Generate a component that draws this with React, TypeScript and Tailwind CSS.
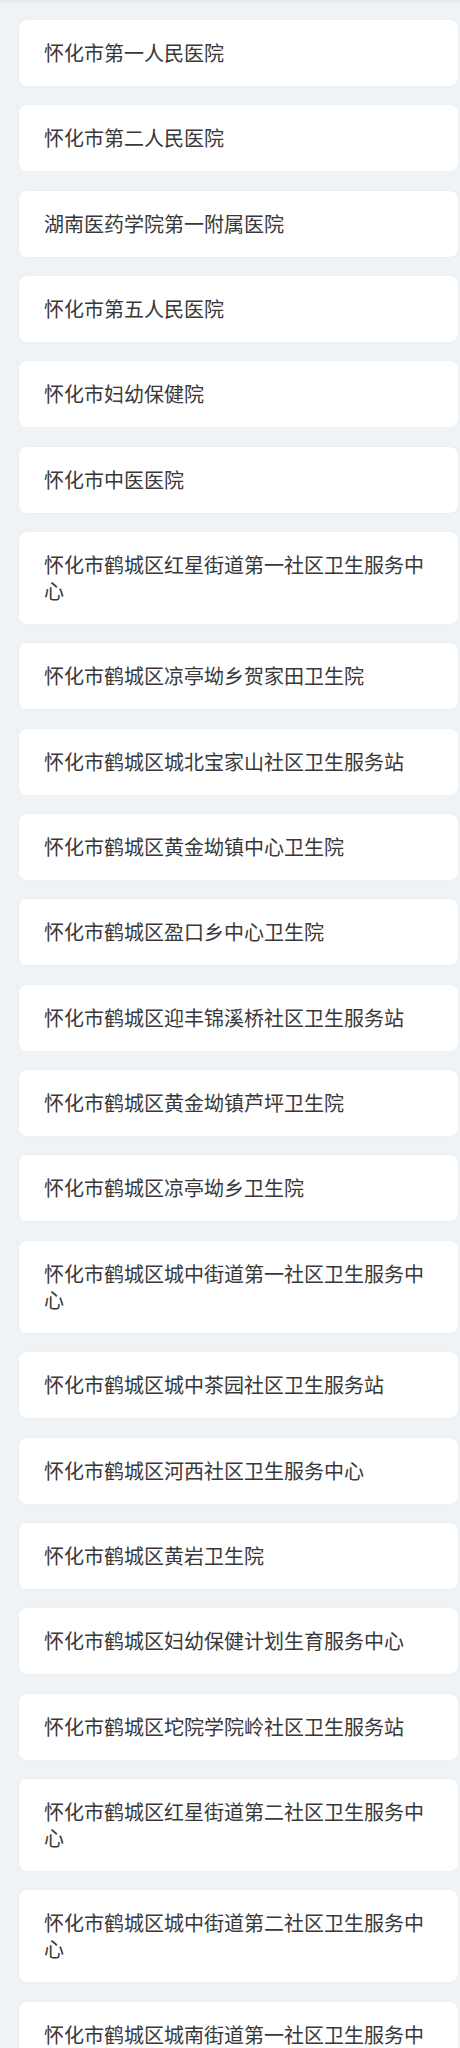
const HOSPITALS = [
  "怀化市第一人民医院",
  "怀化市第二人民医院",
  "湖南医药学院第一附属医院",
  "怀化市第五人民医院",
  "怀化市妇幼保健院",
  "怀化市中医医院",
  "怀化市鹤城区红星街道第一社区卫生服务中心",
  "怀化市鹤城区凉亭坳乡贺家田卫生院",
  "怀化市鹤城区城北宝家山社区卫生服务站",
  "怀化市鹤城区黄金坳镇中心卫生院",
  "怀化市鹤城区盈口乡中心卫生院",
  "怀化市鹤城区迎丰锦溪桥社区卫生服务站",
  "怀化市鹤城区黄金坳镇芦坪卫生院",
  "怀化市鹤城区凉亭坳乡卫生院",
  "怀化市鹤城区城中街道第一社区卫生服务中心",
  "怀化市鹤城区城中茶园社区卫生服务站",
  "怀化市鹤城区河西社区卫生服务中心",
  "怀化市鹤城区黄岩卫生院",
  "怀化市鹤城区妇幼保健计划生育服务中心",
  "怀化市鹤城区坨院学院岭社区卫生服务站",
  "怀化市鹤城区红星街道第二社区卫生服务中心",
  "怀化市鹤城区城中街道第二社区卫生服务中心",
  "怀化市鹤城区城南街道第一社区卫生服务中心",
];

export default function App() {
  return (
    <div
      className="min-h-screen bg-[#f0f3f6] border-t-[3px] border-[#e8ecef]"
      style={{ fontFamily: '"Noto Sans CJK SC", "Noto Sans", sans-serif' }}
    >
      <ul className="flex flex-col gap-[19.35px] pt-[17px] pb-5 pl-[19px] pr-[2px]">
        {HOSPITALS.map((name, i) => (
          <li
            key={i}
            className="bg-white rounded-lg shadow-[0_0_2px_rgba(0,0,0,0.06)] px-[25px] py-[20px] text-[20px] leading-[26px] text-[#383838]"
          >
            {name}
          </li>
        ))}
      </ul>
    </div>
  );
}
